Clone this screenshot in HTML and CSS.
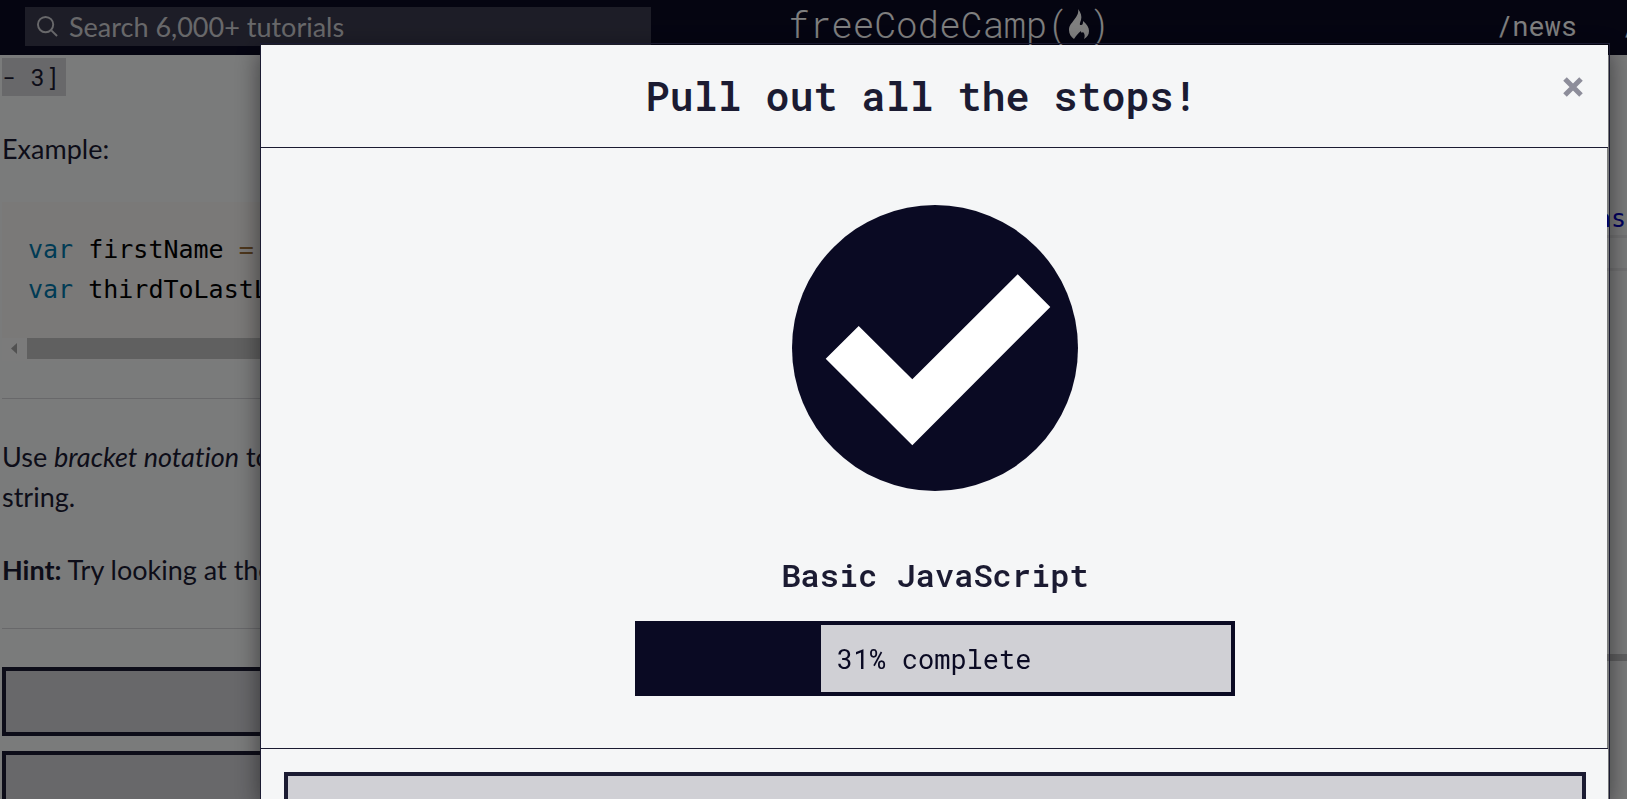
FILE: index.html
```html
<!DOCTYPE html>
<html lang="en">
<head>
<meta charset="utf-8">
<title>freeCodeCamp</title>
<link rel="stylesheet" href="styles.css">
</head>
<body>
<header class="navbar">
  <form class="search" role="search">
    <svg class="search-icon" viewBox="0 0 22 22" aria-hidden="true"><circle cx="9" cy="9" r="8"/><path d="M15 15l6 6"/></svg>
    <input class="search-input" type="text" aria-label="Search tutorials" placeholder="Search 6,000+ tutorials">
  </form>
  <a class="logo" href="#">
    <span>freeCodeCamp(</span>
    <svg class="flame" viewBox="0 0 20 30" aria-hidden="true"><path d="M9 0c3 4 4 7 3 11-1 3-2 5 0 5s2-2 2-4c4 3 6 7 6 10 0 4-2 6-5 8 1-3 1-5-1-7-1 1-2 1-2-1-3 2-5 5-7 8C2 28 0 25 0 21c0-5 3-7 5-10 3-4 5-7 4-11z"/></svg>
    <span>)</span>
  </a>
  <nav class="nav-links">
    <a href="#">/news</a>
    <a href="#">/learn</a>
  </nav>
</header>

<main class="panes">
  <section class="instructions">
    <p><code class="inline-code">- 3]</code></p>
    <p>Example:</p>
    <div class="code-block">
      <pre><span class="keyword">var</span> firstName <span class="operator">=</span>
<span class="keyword">var</span> thirdToLastL</pre>
      <div class="scrollbar" aria-hidden="true">
        <svg class="scroll-arrow" viewBox="0 0 6 11"><path d="M6 0v11L0 5.500z"/></svg>
        <div class="scroll-thumb"></div>
      </div>
    </div>
    <hr>
    <p>Use <em>bracket notation</em> to<br>string.</p>
    <p><strong>Hint:</strong> Try looking at the</p>
    <hr>
    <button class="btn pane-btn" type="button" aria-label="Run the tests"></button>
    <button class="btn pane-btn" type="button" aria-label="Reset all code"></button>
  </section>
  <section class="editor">
    <div class="editor-line">as</div>
    <div class="editor-row"></div>
    <div class="editor-split"></div>
  </section>
</main>

<div class="backdrop">
  <div class="modal" role="dialog" aria-labelledby="modal-title">
    <div class="modal-header">
      <h1 id="modal-title">Pull out all the stops!</h1>
      <button class="close" type="button" aria-label="Close">
        <svg viewBox="0 0 20 20" aria-hidden="true"><path d="M2 2l16 16M18 2L2 18"/></svg>
      </button>
    </div>
    <div class="modal-body">
      <svg class="success" viewBox="0 0 286 286" role="img" aria-label="Passed"><circle cx="143" cy="143" r="143"/><path d="M66.700 121l53.600 53.300L225.700 69.300 258.300 102l-138 138.300-86.600-86.600z"/></svg>
      <h2>Basic JavaScript</h2>
      <div class="progress">
        <div class="progress-fill" style="width: 31%"></div>
        <span>31% complete</span>
      </div>
    </div>
    <div class="modal-footer">
      <button class="btn" type="button" aria-label="Submit and go to next challenge"></button>
    </div>
  </div>
</div>
</body>
</html>
```

FILE: styles.css
```css
* {
  box-sizing: border-box;
}

body {
  display: flex;
  flex-direction: column;
  margin: 0;
  height: 100vh;
  overflow: hidden;
  background: #f5f6f7;
  color: #1b1b32;
  font-family: Lato, sans-serif;
  font-size: 27px;
  font-variant-ligatures: none;
  line-height: 40px;
}

.navbar {
  display: flex;
  flex: none;
  align-items: center;
  height: 55px;
  padding: 0 0 2px 25px;
  background: #0a0a23;
}

.search {
  display: flex;
  align-items: center;
  flex: 0 0 626px;
  height: 39px;
  padding-left: 12px;
  gap: 11px;
  background: #3b3b4f;
}

.search-icon {
  width: 21px;
  height: 21px;
  fill: none;
  stroke: #d0d0d5;
  stroke-width: 2;
}

.search-input {
  flex: 1;
  min-width: 0;
  height: 39px;
  padding: 0;
  border: 0;
  background: transparent;
  color: #d0d0d5;
  font: inherit;
}

.search-input::placeholder {
  color: #d0d0d5;
}

.logo {
  display: flex;
  align-items: center;
  margin-left: 137px;
  padding-bottom: 6px;
  color: #fff;
  font-family: "Roboto Mono", "Liberation Mono", monospace;
  font-size: 36px;
  font-weight: 300;
  text-decoration: none;
}

.flame {
  width: 20px;
  height: 30px;
  fill: #fff;
}

.nav-links {
  display: flex;
  gap: 45px;
  width: 131px;
  margin-left: auto;
  padding-bottom: 2px;
  overflow: hidden;
}

.nav-links a {
  color: #fff;
  font-family: "Roboto Mono", "Liberation Mono", monospace;
  text-decoration: none;
}

.panes {
  display: flex;
  flex: 1;
  min-height: 0;
  overflow: hidden;
}

.instructions {
  flex: 1;
  padding: 3px 0 0 2px;
}

.instructions p {
  margin: 0 0 33px;
}

.instructions p:first-child {
  margin-bottom: 31px;
}

.inline-code {
  display: inline-block;
  height: 38px;
  padding-right: 6px;
  background: #d0d0d5;
  font-family: "Roboto Mono", "Liberation Mono", monospace;
  font-size: 24px;
  line-height: 38px;
  vertical-align: top;
}

.code-block {
  background: #f5f2f0;
}

.code-block pre {
  margin: 0;
  padding: 28px 26px;
  color: #000;
  font-family: Consolas, "DejaVu Sans Mono", monospace;
  font-size: 25px;
}

.keyword {
  color: #0077aa;
}

.operator {
  color: #9a6e3a;
}

.scrollbar {
  display: flex;
  height: 23px;
  padding: 0 0 2px 9px;
  gap: 10px;
  background: #f6f6f6;
}

.scroll-arrow {
  width: 6px;
  height: 11px;
  margin-top: 5px;
  fill: #a3a3a3;
}

.scroll-thumb {
  flex: 1;
  background: #c1c1c1;
}

.instructions hr {
  height: 1px;
  margin: 38px 0;
  border: 0;
  background: #d0d0d5;
}

.code-block + hr {
  margin-top: 37px;
}

.instructions .code-block + hr {
  margin-top: 37px;
}

.btn {
  display: block;
  width: 100%;
  height: 69px;
  border: 4px solid #1b1b32;
  background: #d0d0d5;
}

.pane-btn {
  margin-bottom: 15px;
}

.editor {
  flex: 0 0 40%;
  padding-top: 144px;
}

.editor-line {
  height: 36px;
  padding-right: 1px;
  color: #0000c0;
  font-family: Consolas, "DejaVu Sans Mono", monospace;
  font-size: 25px;
  text-align: right;
}

.editor-row {
  height: 36px;
  border: solid #e6e6e8;
  border-width: 3px 0;
}

.editor-split {
  height: 7px;
  margin-top: 383px;
  background: #c0c0c2;
}

.backdrop {
  position: fixed;
  inset: 0;
  padding: 43px 17px 0 260px;
  overflow: hidden;
  background: rgba(0, 0, 0, 0.5);
}

.modal {
  display: flex;
  flex-direction: column;
  height: 100%;
  padding: 1px 1px 0 0;
  border: 1px solid #1b1b32;
  border-bottom: 0;
  box-shadow: 0 8px 23px rgba(0, 0, 0, 0.5);
}

.modal-header {
  position: relative;
  padding: 31px 48px 31px 22px;
  border-bottom: 1px solid #1b1b32;
  background: #f5f6f7;
  text-align: center;
}

h1,
h2 {
  margin: 0;
  font-family: "Roboto Mono", "Liberation Mono", monospace;
  font-weight: 600;
  line-height: 40px;
}

h1 {
  font-size: 40px;
}

h2 {
  margin: 64px 0 26px;
  font-size: 32px;
}

.close {
  position: absolute;
  top: 32px;
  right: 25px;
  width: 20px;
  height: 20px;
  padding: 0;
  border: 0;
  background: transparent;
}

.close svg {
  display: block;
  stroke: #8d8d9a;
  stroke-width: 5;
}

.modal-body {
  display: flex;
  flex: none;
  flex-direction: column;
  align-items: center;
  margin-right: 1px;
  padding: 57px 22px 52px 24px;
  background: #f5f6f7;
}

.success {
  width: 286px;
  height: 286px;
  fill: #0a0a23;
}

.success path {
  fill: #fff;
}

.progress {
  display: flex;
  align-items: center;
  width: 600px;
  height: 75px;
  background: #d0d0d5;
  box-shadow: inset 0 0 0 4px #0a0a23;
  color: #0a0a23;
  font-family: "Roboto Mono", "Liberation Mono", monospace;
  gap: 16px;
}

.progress-fill {
  height: 100%;
  background: #0a0a23;
}

.modal-footer {
  flex: 1;
  min-height: 0;
  padding: 23px 22px 0 23px;
  overflow: hidden;
  border-top: 1px solid #1b1b32;
  background: #f5f6f7;
}
```
